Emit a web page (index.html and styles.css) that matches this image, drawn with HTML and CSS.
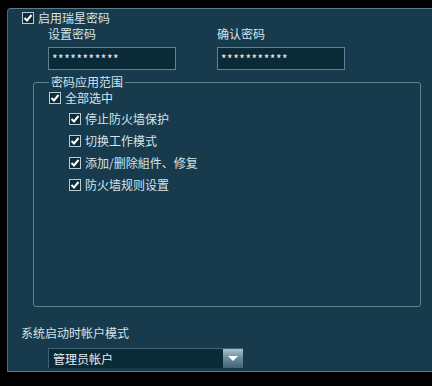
FILE: index.html
```html
<!DOCTYPE html>
<html lang="zh-CN">
<head>
  <meta charset="UTF-8">
  <title>密码设置</title>
  <link rel="stylesheet" href="styles.css">
</head>
<body>

  <div class="panel">
    <label class="check top-check">
      <svg class="box" width="12" height="12" viewBox="0 0 12 12"><rect x="0.5" y="0.5" width="11" height="11" fill="#0d2c3a" stroke="#b9cbd3"/><polyline points="2.5,6 5,8.5 9.5,3" fill="none" stroke="#ffffff" stroke-width="2"/></svg>
      启用瑞星密码
    </label>

    <div class="fields">
      <div class="field">
        <div class="field-label">设置密码</div>
        <div class="input">***********</div>
      </div>
      <div class="field">
        <div class="field-label">确认密码</div>
        <div class="input">***********</div>
      </div>
    </div>

    <fieldset class="group">
      <legend>密码应用范围</legend>
      <label class="check">
        <svg class="box" width="12" height="12" viewBox="0 0 12 12"><rect x="0.5" y="0.5" width="11" height="11" fill="#0d2c3a" stroke="#b9cbd3"/><polyline points="2.5,6 5,8.5 9.5,3" fill="none" stroke="#ffffff" stroke-width="2"/></svg>
        全部选中
      </label>
      <div class="sub-list">
        <label class="check">
          <svg class="box" width="12" height="12" viewBox="0 0 12 12"><rect x="0.5" y="0.5" width="11" height="11" fill="#0d2c3a" stroke="#b9cbd3"/><polyline points="2.5,6 5,8.5 9.5,3" fill="none" stroke="#ffffff" stroke-width="2"/></svg>
          停止防火墙保护
        </label>
        <label class="check">
          <svg class="box" width="12" height="12" viewBox="0 0 12 12"><rect x="0.5" y="0.5" width="11" height="11" fill="#0d2c3a" stroke="#b9cbd3"/><polyline points="2.5,6 5,8.5 9.5,3" fill="none" stroke="#ffffff" stroke-width="2"/></svg>
          切换工作模式
        </label>
        <label class="check">
          <svg class="box" width="12" height="12" viewBox="0 0 12 12"><rect x="0.5" y="0.5" width="11" height="11" fill="#0d2c3a" stroke="#b9cbd3"/><polyline points="2.5,6 5,8.5 9.5,3" fill="none" stroke="#ffffff" stroke-width="2"/></svg>
          添加/删除組件、修复
        </label>
        <label class="check">
          <svg class="box" width="12" height="12" viewBox="0 0 12 12"><rect x="0.5" y="0.5" width="11" height="11" fill="#0d2c3a" stroke="#b9cbd3"/><polyline points="2.5,6 5,8.5 9.5,3" fill="none" stroke="#ffffff" stroke-width="2"/></svg>
          防火墙规则设置
        </label>
      </div>
    </fieldset>

    <div class="mode-label">系统启动时帐户模式</div>
    <div class="select">
      <span class="select-text">管理员帐户</span>
      <span class="select-btn">
        <svg width="10" height="6" viewBox="0 0 10 6"><polygon points="0,0 10,0 5,5" fill="#ffffff"/></svg>
      </span>
    </div>
  </div>

</body>
</html>
```

FILE: styles.css
```css
body {
  margin: 0;
  background-color: #000000;
  font-family: "Noto Sans CJK SC", "Liberation Sans", sans-serif;
  font-size: 12px;
  color: #d6e3e8;
}

.panel {
  box-sizing: border-box;
  margin: 8px 0 0 7px;
  height: 364px;
  padding: 1px 0 0 0;
  background-color: #173b4d;
  border-top: 1px solid #5a7d8c;
  border-left: 1px solid #4a6d7c;
  border-bottom: 1px solid #5a7d8c;
  border-top-left-radius: 4px;
}

.check {
  display: flex;
  align-items: center;
  height: 16px;
  line-height: 16px;
  white-space: nowrap;
}

.check .box {
  margin-right: 4px;
  flex-shrink: 0;
}

.top-check {
  margin-left: 14px;
}

.fields {
  display: flex;
  margin-left: 40px;
}

.field {
  width: 169px;
}

.field-label {
  height: 16px;
  line-height: 16px;
  margin-bottom: 5px;
}

.input {
  box-sizing: border-box;
  width: 128px;
  height: 23px;
  padding-left: 3px;
  line-height: 21px;
  background-color: #0b2a37;
  border: 1px solid #5e8494;
  color: #e6eef2;
  letter-spacing: 0.5px;
}

.group {
  box-sizing: border-box;
  margin: 4px 0 0 25px;
  width: 388px;
  height: 233px;
  padding: 0 0 0 15px;
  border: 1px solid #5e8494;
  border-radius: 3px;
}

.group legend {
  margin-left: 0;
  padding: 0 2px;
  line-height: 16px;
}

.sub-list {
  display: flex;
  flex-direction: column;
  gap: 6px;
  margin: 5px 0 0 20px;
}

.mode-label {
  margin: 18px 0 0 13px;
  line-height: 16px;
}

.select {
  box-sizing: border-box;
  display: flex;
  margin: 7px 0 0 40px;
  width: 195px;
  height: 20px;
  background-color: #0b2a37;
  border-top: 1px solid #3f6575;
  border-left: 1px solid #3f6575;
}

.select-text {
  flex: 1;
  padding-left: 4px;
  line-height: 19px;
  color: #e6eef2;
}

.select-btn {
  display: flex;
  align-items: center;
  justify-content: center;
  width: 20px;
  background: linear-gradient(#a8c2cc, #6d8f9d 45%, #3e6474);
}
```
